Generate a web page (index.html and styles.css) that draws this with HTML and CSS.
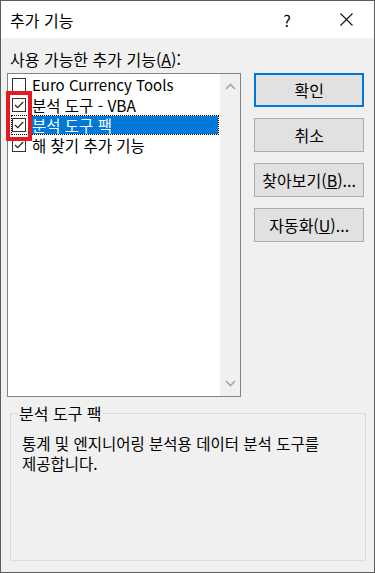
FILE: index.html
```html
<!DOCTYPE html>
<html lang="ko">
<head>
<meta charset="utf-8">
<title>추가 기능</title>
<link rel="stylesheet" href="styles.css">
</head>
<body>
<div class="window">
  <div class="titlebar">
    <span class="title">추가 기능</span>
    <span class="help">?</span>
    <span class="close">
      <svg width="13" height="13" viewBox="0 0 13 13"><path d="M0.5 0.5 L12.5 12.5 M12.5 0.5 L0.5 12.5" stroke="#111" stroke-width="1.1" fill="none"/></svg>
    </span>
  </div>
  <div class="content">
    <div class="label">사용 가능한 추가 기능(<u>A</u>):</div>
    <div class="main">
      <div class="listbox">
        <div class="items">
          <div class="item"><span class="cb"></span><span class="txt latin">Euro Currency Tools</span></div>
          <div class="item"><span class="cb checked"><svg width="12" height="12" viewBox="0 0 12 12"><path d="M2 6 L4.7 8.7 L10.2 3" stroke="#222" stroke-width="1.2" fill="none"/></svg></span><span class="txt">분석 도구 - VBA</span></div>
          <div class="item focused"><span class="cb checked"><svg width="12" height="12" viewBox="0 0 12 12"><path d="M2 6 L4.7 8.7 L10.2 3" stroke="#222" stroke-width="1.2" fill="none"/></svg></span><span class="txt sel">분석 도구 팩</span></div>
          <div class="item"><span class="cb checked"><svg width="12" height="12" viewBox="0 0 12 12"><path d="M2 6 L4.7 8.7 L10.2 3" stroke="#222" stroke-width="1.2" fill="none"/></svg></span><span class="txt">해 찾기 추가 기능</span></div>
          <div class="highlight"></div>
        </div>
        <div class="scrollbar">
          <svg width="11" height="7" viewBox="0 0 11 7"><path d="M1 6 L5.5 1.5 L10 6" stroke="#a6a6a6" stroke-width="1.6" fill="none"/></svg>
          <svg width="11" height="7" viewBox="0 0 11 7"><path d="M1 1 L5.5 5.5 L10 1" stroke="#a6a6a6" stroke-width="1.6" fill="none"/></svg>
        </div>
      </div>
      <div class="buttons">
        <button class="btn default">확인</button>
        <button class="btn">취소</button>
        <button class="btn">찾아보기(<u>B</u>)...</button>
        <button class="btn">자동화(<u>U</u>)...</button>
      </div>
    </div>
    <fieldset class="group">
      <legend>분석 도구 팩</legend>
      <p class="desc">통계 및 엔지니어링 분석용 데이터 분석 도구를<br>제공합니다.</p>
    </fieldset>
  </div>
</div>
</body>
</html>
```
FILE: styles.css
```css
* { box-sizing: border-box; }
html, body { margin: 0; padding: 0; }
body {
  font-family: "Noto Sans CJK KR", "Noto Sans", sans-serif;
  font-size: 16px;
  color: #000;
  background: #f0f0f0;
}
.window {
  width: 375px;
  height: 573px;
  border: 1px solid #5c5c5c;
  background: #f0f0f0;
  display: flex;
  flex-direction: column;
}
.titlebar {
  height: 37px;
  background: #fff;
  display: flex;
  align-items: center;
  padding-left: 9px;
}
.title { flex: 1; line-height: 20px; }
.help { width: 16px; text-align: center; margin-right: 45px; line-height: 20px; }
.close { width: 13px; height: 13px; margin-right: 21px; display: flex; }
.content {
  padding: 0 10px 0 6px;
  display: flex;
  flex-direction: column;
}
.label {
  line-height: 20px;
  margin-top: 11px;
  padding-left: 3px;
}
.main {
  display: flex;
  gap: 13px;
  margin-top: 4px;
}
.listbox {
  width: 235px;
  height: 324px;
  border: 1px solid #828282;
  display: flex;
}
.items {
  flex: 1;
  background: #fff;
  padding-top: 1px;
  position: relative;
  font-size: 15.5px;
}
.item {
  height: 20px;
  display: flex;
  align-items: center;
  padding-left: 4px;
  padding-right: 2px;
}
.cb {
  width: 14px;
  height: 14px;
  border: 1px solid #333;
  background: #fff;
  margin-right: 3px;
  display: flex;
  align-items: center;
  justify-content: center;
  flex: none;
}
.txt {
  line-height: 18px;
  padding: 0 3px;
  white-space: nowrap;
}
.txt.latin { font-size: 15px; }
.txt.sel {
  flex: 1;
  background: #0078d7;
  color: #fff;
}
.item.focused {
  outline: 1px dotted #000;
  outline-offset: -1px;
  margin: 0 1px 0 3px;
  padding-left: 1px;
  padding-right: 1px;
}
.highlight {
  position: absolute;
  left: -2px;
  top: 17px;
  width: 26px;
  height: 50px;
  border: 4px solid #e31a1f;
}
.scrollbar {
  width: 20px;
  background: #f0f0f0;
  display: flex;
  flex-direction: column;
  justify-content: space-between;
  align-items: center;
  padding: 9px 0 9px;
}
.buttons {
  width: 110px;
  display: flex;
  flex-direction: column;
  gap: 11px;
}
.btn {
  height: 34px;
  background: #e1e1e1;
  border: 1px solid #adadad;
  font-family: inherit;
  font-size: 16px;
  color: #000;
  padding: 0;
  line-height: 20px;
}
.btn.default {
  border: 2px solid #0078d7;
}
.group {
  margin: 6px 0 0 3px;
  width: 356px;
  height: 158px;
  border: 1px solid #dcdcdc;
  padding: 0 0 0 7px;
}
.group legend {
  padding: 0 1px;
  line-height: 20px;
}
.desc {
  margin: 10px 0 0 4px;
  line-height: 20px;
  font-size: 15.5px;
}
```
